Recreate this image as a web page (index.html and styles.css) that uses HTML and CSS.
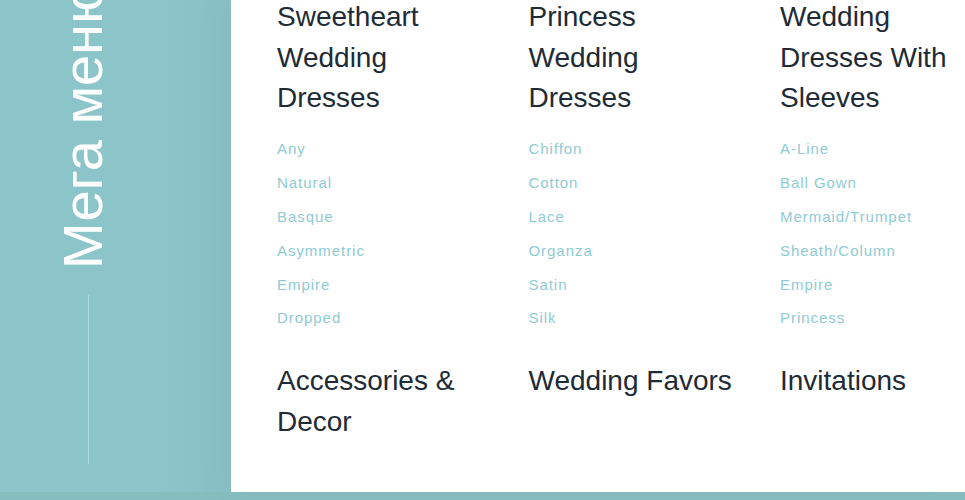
FILE: index.html
```html
<!DOCTYPE html>
<html lang="ru">
<head>
<meta charset="utf-8">
<title>Мега меню</title>
<link rel="stylesheet" href="styles.css">
</head>
<body>
<div class="page">
  <aside class="sidebar">
    <div class="vtitle">Мега меню</div>
    <div class="vline"></div>
  </aside>
  <main class="panel">
    <div class="grid">
      <section class="col">
        <h3 class="head">Sweetheart Wedding Dresses</h3>
        <ul class="links">
          <li>Any</li><li>Natural</li><li>Basque</li><li>Asymmetric</li><li>Empire</li><li>Dropped</li>
        </ul>
      </section>
      <section class="col">
        <h3 class="head">Princess Wedding Dresses</h3>
        <ul class="links">
          <li>Chiffon</li><li>Cotton</li><li>Lace</li><li>Organza</li><li>Satin</li><li>Silk</li>
        </ul>
      </section>
      <section class="col">
        <h3 class="head">Wedding Dresses With Sleeves</h3>
        <ul class="links">
          <li>A-Line</li><li>Ball Gown</li><li>Mermaid/Trumpet</li><li>Sheath/Column</li><li>Empire</li><li>Princess</li>
        </ul>
      </section>
      <section class="col"><h3 class="head">Accessories &amp; Decor</h3></section>
      <section class="col"><h3 class="head">Wedding Favors</h3></section>
      <section class="col"><h3 class="head">Invitations</h3></section>
    </div>
  </main>
</div>
</body>
</html>
```
FILE: styles.css
```css
html, body {
  margin: 0;
  padding: 0;
  height: 100%;
  overflow: hidden;
}
body {
  background: #8bc4c8;
  font-family: "Liberation Sans", Arial, sans-serif;
}
.page {
  display: flex;
  height: 500px;
  background: linear-gradient(to bottom, #8bc4c8 0, #8bc4c8 492px, #86bdbf 492px);
}
.sidebar {
  width: 231px;
  flex: 0 0 231px;
  display: flex;
  flex-direction: column;
  align-items: flex-start;
  padding-left: 55px;
  box-sizing: border-box;
  background: linear-gradient(to right, #8bc4c9 0, #8bc4c9 160px, #88c0c4 231px);
  height: 492px;
}
.vtitle {
  writing-mode: vertical-rl;
  transform: rotate(180deg);
  color: #ffffff;
  font-size: 56px;
  line-height: 56px;
  white-space: nowrap;
  margin-top: -18px;
}
.vline {
  width: 1px;
  height: 169px;
  margin-top: 26px;
  margin-left: 33px;
  background: rgba(255, 255, 255, 0.35);
}
.panel {
  flex: 1;
  height: 492px;
  background: #ffffff;
  overflow: hidden;
  box-shadow: -8px 0 30px rgba(60, 110, 115, 0.06);
}
.grid {
  display: grid;
  grid-template-columns: repeat(3, 215px);
  column-gap: 36.5px;
  row-gap: 26px;
  padding-left: 46px;
  margin-top: -3px;
}
.head {
  margin: 0;
  font-size: 28px;
  font-weight: normal;
  line-height: 40.6px;
  color: #202b36;
}
.links {
  list-style: none;
  margin: 13.6px 0 0;
  padding: 0;
}
.links li {
  font-size: 15px;
  line-height: 33.8px;
  letter-spacing: 0.95px;
  color: #8ecbd3;
}
```
